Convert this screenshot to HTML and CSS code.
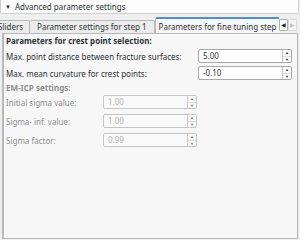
FILE: index.html
```html
<!DOCTYPE html>
<html>
<head>
<meta charset="utf-8">
<title>Advanced parameter settings</title>
<link rel="stylesheet" href="styles.css">
</head>
<body>
<div class="header"><span class="caret">&#9660;</span>Advanced parameter settings</div>

<div class="tabbar">
  <div class="tabs">
    <div class="tab first">Sliders</div>
    <div class="tab second">Parameter settings for step 1</div>
    <div class="tab active">Parameters for fine tuning step</div>
  </div>
  <div class="scroller">
    <div class="scroll-btn">&#9664;</div>
    <div class="scroll-btn off">&#9654;</div>
  </div>
</div>

<div class="panel">
  <div class="group-title">Parameters for crest point selection:</div>
  <div class="form wide">
    <label>Max. point distance between fracture surfaces:</label>
    <div class="spin"><span class="val">5.00</span><span class="btns"><i>&#9650;</i><i>&#9660;</i></span></div>
    <label>Max. mean curvature for crest points:</label>
    <div class="spin"><span class="val">-0.10</span><span class="btns"><i>&#9650;</i><i>&#9660;</i></span></div>
  </div>

  <div class="group-title off">EM-ICP settings:</div>
  <div class="form narrow off">
    <label>Initial sigma value:</label>
    <div class="spin"><span class="val">1.00</span><span class="btns"><i>&#9650;</i><i>&#9660;</i></span></div>
    <label>Sigma- inf. value:</label>
    <div class="spin"><span class="val">1.00</span><span class="btns"><i>&#9650;</i><i>&#9660;</i></span></div>
    <label>Sigma factor:</label>
    <div class="spin"><span class="val">0.99</span><span class="btns"><i>&#9650;</i><i>&#9660;</i></span></div>
  </div>
</div>
</body>
</html>
```

FILE: styles.css
```css
body {
  margin: 0;
  width: 300px;
  height: 240px;
  overflow: hidden;
  background-color: #efefef;
  font-family: "Noto Sans", "Open Sans", sans-serif;
  font-size: 8px;
  color: #2e3436;
}

.header {
  height: 13px;
  line-height: 14px;
  margin-right: 1px;
  padding-left: 4px;
  background-color: #fdfdfd;
  border: 1px solid #cfcfcf;
  border-top: none;
  border-radius: 0 0 2px 2px;
}

.caret {
  font-size: 6px;
  margin-right: 4px;
  vertical-align: 1px;
}

.tabbar {
  display: flex;
  align-items: flex-end;
  height: 15px;
  margin-top: 4px;
  padding: 0 3px 0 0;
}

.tabs {
  display: flex;
  align-items: flex-end;
  overflow: hidden;
  flex: 1;
}

.tab {
  flex: none;
  height: 12px;
  line-height: 12px;
  padding: 0 6px;
  white-space: nowrap;
  background-color: #ececec;
  border: 1px solid #b9b9b9;
  border-bottom: none;
  border-left: none;
  border-radius: 2px 2px 0 0;
}

.tab.first {
  margin-left: -8px;
}

.tab.second {
  padding: 0 7px;
}

.tab.active {
  height: 14px;
  line-height: 15px;
  padding: 0 3px;
  background-color: #f7f7f7;
  border-top: 2px solid #4a90d9;
  border-left: 1px solid #b9b9b9;
}

.scroller {
  display: flex;
  margin-bottom: 2px;
}

.scroll-btn {
  width: 7px;
  height: 10px;
  line-height: 10px;
  text-align: center;
  font-size: 6px;
  color: #222;
  background-color: #fff;
  border: 1px solid #b0b0b0;
  border-radius: 1px;
}

.scroll-btn.off {
  color: #c4c4c4;
  background-color: #f4f4f4;
  border-color: #dcdcdc;
}

.panel {
  height: 202px;
  margin: 0 2px;
  padding: 1px 2px;
  background-color: #f7f7f7;
  border: 1px solid #b9b9b9;
  border-left-width: 2px;
}

.group-title {
  font-weight: bold;
  line-height: 10px;
  margin-top: 1px;
}

.group-title.off {
  color: #8f8f8f;
  margin-top: 3px;
}

.form {
  display: grid;
  align-items: center;
  row-gap: 3px;
  margin-top: 3px;
}

.form.wide {
  grid-template-columns: 192px 94px;
}

.form.narrow {
  grid-template-columns: 97px 94px;
  row-gap: 5px;
  margin-top: 2px;
}

.form label {
  white-space: nowrap;
}

.spin {
  display: flex;
  height: 12px;
  background-color: #fff;
  border: 1px solid #a9a9a9;
  border-radius: 2px;
}

.spin .val {
  flex: 1;
  line-height: 12px;
  padding-left: 4px;
}

.spin .btns {
  display: flex;
  flex-direction: column;
  width: 8px;
  border-left: 1px solid #c9c9c9;
}

.spin .btns i {
  flex: 1;
  font-style: normal;
  font-size: 4px;
  line-height: 6px;
  text-align: center;
  color: #333;
}

.spin .btns i + i {
  border-top: 1px solid #dadada;
}

.form.off label {
  color: #8f8f8f;
}

.form.off .spin {
  background-color: #fafafa;
  border-color: #c6c6c6;
}

.form.off .val {
  color: #b4b4b4;
}

.form.off .btns i {
  color: #777;
}
```
